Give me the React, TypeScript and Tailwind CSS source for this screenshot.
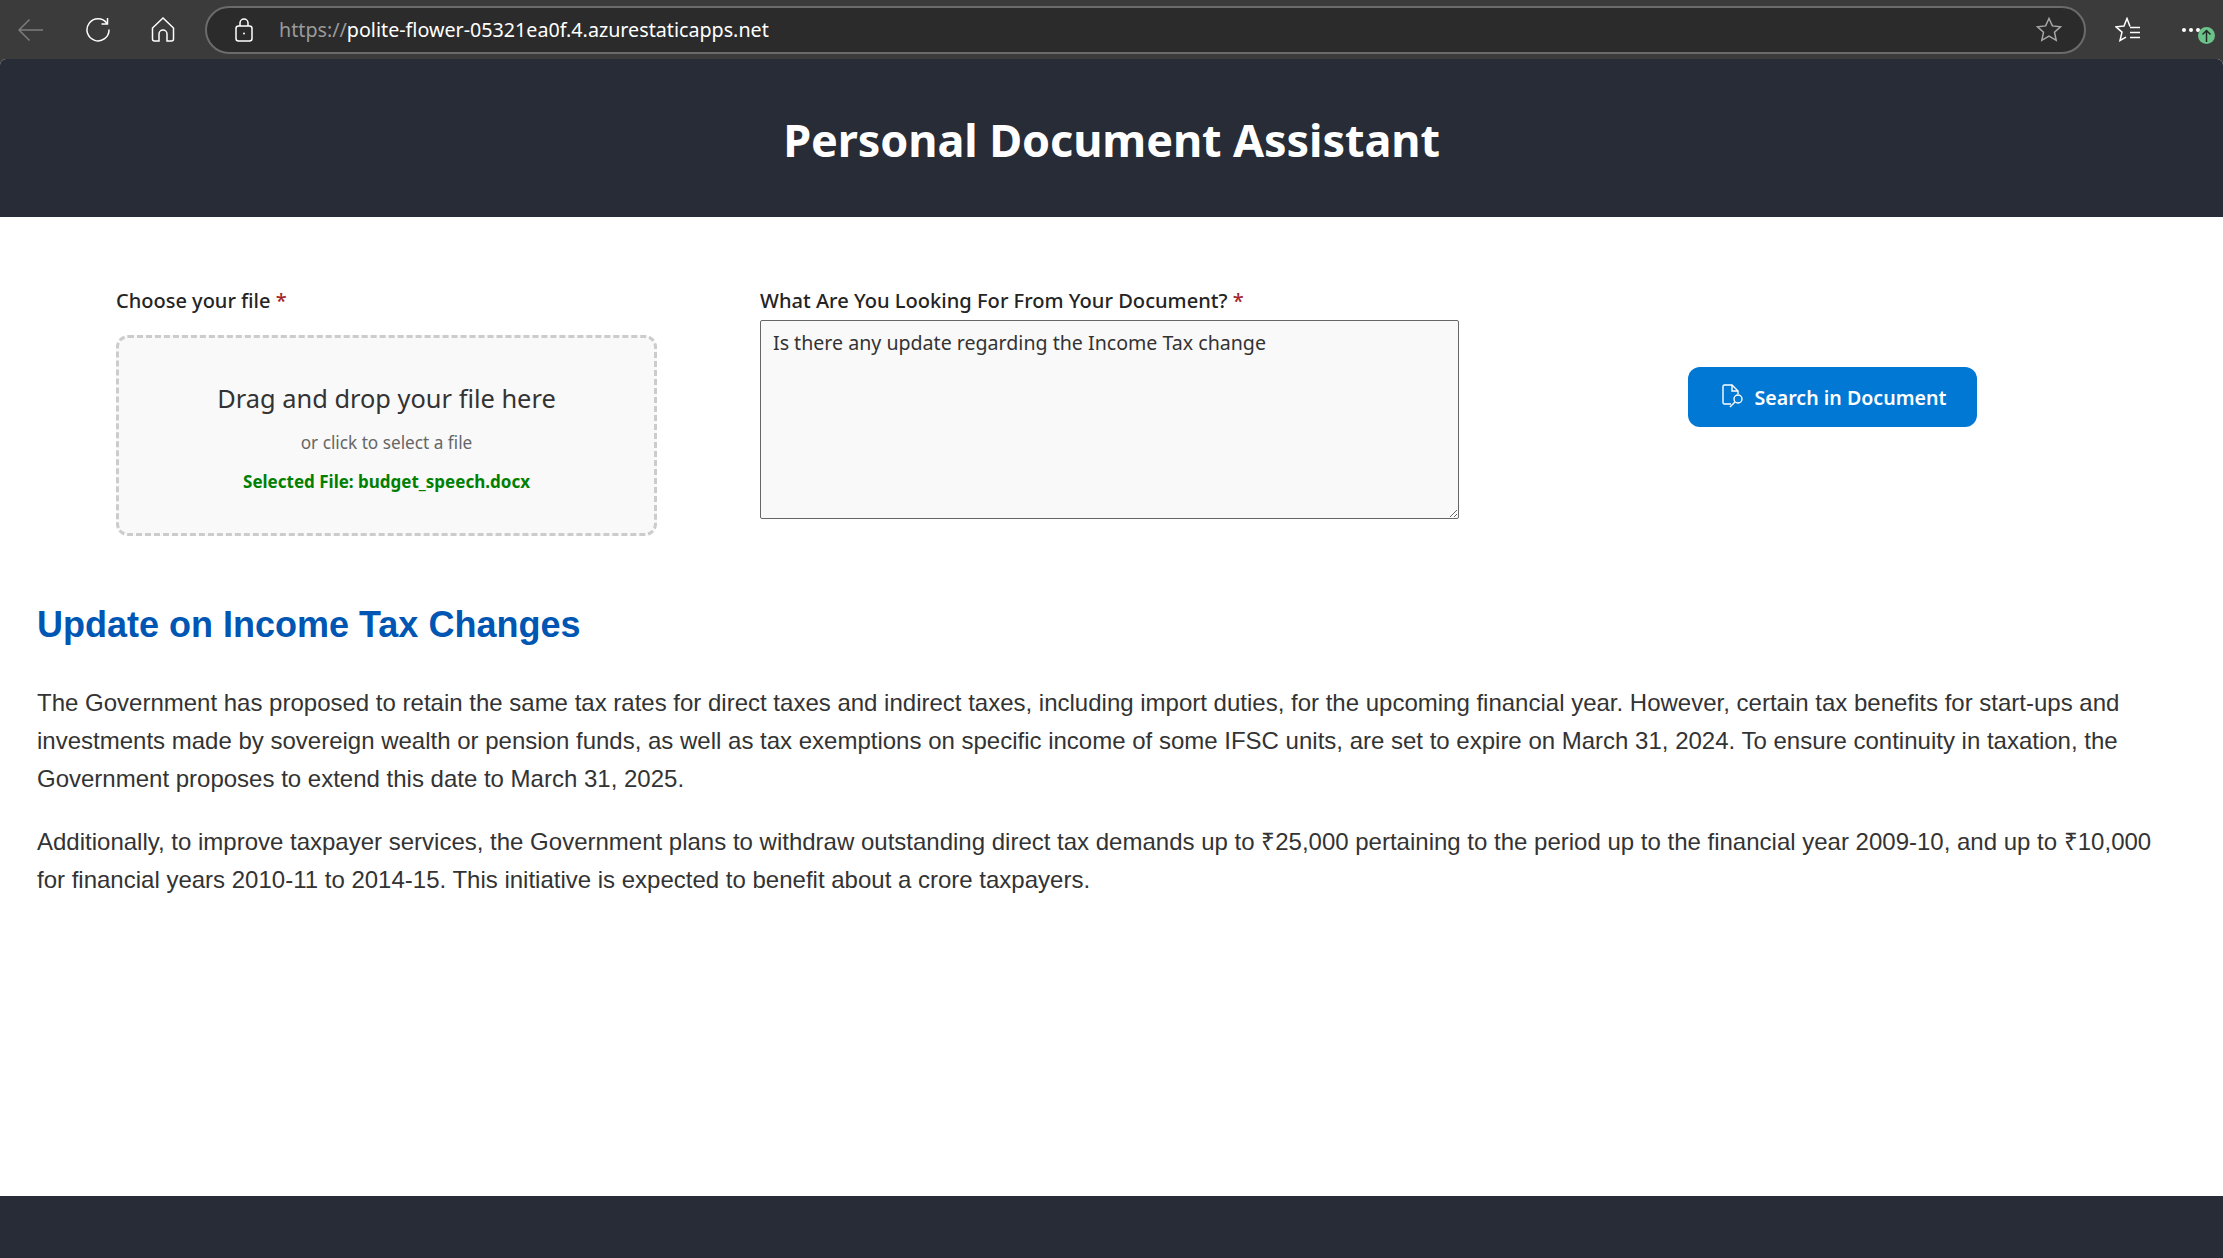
import React from 'react'

const ui = "font-['Noto_Sans',sans-serif]"

const BrowserBar = () => (
    <div className="flex h-[59px] items-center bg-[#3b3b3b] shrink-0">
        <svg className="ml-[18px] w-[25px] h-[24px]" viewBox="0 0 25 24" fill="none" stroke="#7d7d7d" strokeWidth="1.5">
            <path d="M1 12h24M11.5 1.5 1 12l10.5 10.5" />
        </svg>
        <svg className="ml-[42px] w-[25px] h-[25px]" viewBox="0 0 25 25" fill="none" stroke="#fff" strokeWidth="1.5">
            <path d="M22 6.5A11 11 0 1 0 24 12.5" />
            <path d="M22.5 1v6h-6" />
        </svg>
        <svg className="ml-[41px] w-[24px] h-[25px]" viewBox="0 0 24 25" fill="none" stroke="#fff" strokeWidth="1.5">
            <path d="M12 1 1.5 11v11a2 2 0 0 0 2 2h4.5v-7a4 4 0 0 1 8 0v7h4.5a2 2 0 0 0 2-2V11z" />
        </svg>
        <div className="ml-[30px] flex h-[48px] w-[1881px] items-center rounded-full border-2 border-[#6b6b6b] bg-[#2b2b2b]">
            <svg className="ml-[28px] w-[18px] h-[24px]" viewBox="0 0 18 24" fill="none" stroke="#fff" strokeWidth="1.5">
                <rect x="1" y="8" width="16" height="15" rx="2.5" />
                <path d="M5 8V5a4 4 0 0 1 8 0v3" />
                <circle cx="9" cy="15.5" r="1" fill="#fff" stroke="none" />
            </svg>
            <span className={`ml-[26px] text-[19.7px] text-white whitespace-nowrap ${ui}`}>
                <span className="text-[#9a9a9a]">https://</span>polite-flower-05321ea0f.4.azurestaticapps.net
            </span>
            <svg className="ml-auto mr-[22px] w-[26px] h-[25px]" viewBox="0 0 26 25" fill="none" stroke="#a8a8a8" strokeWidth="1.5">
                <path d="m13 1.5 3.4 7.4 8.1.9-6 5.5 1.7 8-7.2-4.1-7.2 4.1 1.7-8-6-5.5 8.1-.9z" />
            </svg>
        </div>
        <svg className="ml-[29px] w-[26px] h-[25px]" viewBox="0 0 26 25" fill="none" stroke="#fff" strokeWidth="1.5">
            <path d="M15 9.5 12 1.5 9 9l-8 .8 6 5.3-2 8.4 6-3.3" />
            <path d="M15 10.5h10M15 15.5h10M15 20.5h10" />
        </svg>
        <div className="relative ml-[41px] flex gap-[3px]">
            <span className="w-[4px] h-[4px] rounded-full bg-white" />
            <span className="w-[4px] h-[4px] rounded-full bg-white" />
            <span className="w-[4px] h-[4px] rounded-full bg-white" />
            <span className="absolute left-[16px] top-[-1px] flex w-[17px] h-[17px] items-center justify-center rounded-full bg-[#6cc38a]">
                <svg className="w-[11px] h-[13px]" viewBox="0 0 11 13" fill="none" stroke="#1f2a24" strokeWidth="1.5">
                    <path d="M5.5 13V1.5M1.5 5.5l4-4 4 4" />
                </svg>
            </span>
        </div>
    </div>
)

const App = () => {
    return (
        <div className="flex h-screen flex-col overflow-hidden bg-[#3b3b3b]">
            <BrowserBar />
            <div className="flex flex-1 flex-col overflow-hidden rounded-t-[6px] bg-white">
                <header className="flex h-[158px] shrink-0 items-center justify-center bg-[#282c36] pt-[3px]">
                    <h1 className={`text-[45px] font-bold tracking-[-0.1px] text-white ${ui}`}>Personal Document Assistant</h1>
                </header>

                <main className="flex-1">
                    <div className={`flex items-start pl-[116px] pt-[71px] ${ui}`}>
                        <div className="w-[541px]">
                            <label className="block text-[20px] font-medium leading-[26px] text-[#242424]">
                                Choose your file <span className="text-[#a4262c]">*</span>
                            </label>
                            <div className="mt-[21px] flex h-[201px] flex-col items-center rounded-[12px] border-[3px] border-dashed border-[#ccc] bg-[#f9f9f9] text-center">
                                <p className="mt-[42px] text-[25.4px] leading-[36px] text-[#333]">Drag and drop your file here</p>
                                <p className="mt-[15px] text-[17.2px] leading-[24px] text-[#666]">or click to select a file</p>
                                <p className="mt-[15px] text-[17px] font-bold leading-[24px] text-[#008000]">Selected File: budget_speech.docx</p>
                            </div>
                        </div>

                        <div className="ml-[103px] w-[699px]">
                            <label className="block text-[20.1px] font-medium leading-[26px] text-[#242424]">
                                What Are You Looking For From Your Document? <span className="text-[#a4262c]">*</span>
                            </label>
                            <textarea
                                className="mt-[6px] block h-[199px] w-full rounded-[2px] border border-[#666] bg-[#f9f9f9] px-[12px] pt-[9px] pb-[7px] text-[19.6px] leading-[26px] text-[#333]"
                                defaultValue="Is there any update regarding the Income Tax change"
                            />
                        </div>

                        <button className="ml-[229px] mt-[79px] flex h-[60px] w-[289px] items-center justify-center gap-[11px] rounded-[12px] bg-[#0078d4] pl-[3px] pt-[2px] text-[19.6px] font-semibold text-white">
                            <svg className="w-[22px] h-[24px] -translate-y-[2px]" viewBox="0 0 22 24" fill="none" stroke="#fff" strokeWidth="1.4">
                                <path d="M9 20H2.5a1.5 1.5 0 0 1-1.5-1.5v-16A1.5 1.5 0 0 1 2.5 1H10l6 6v3" />
                                <path d="M10 1v6h6" />
                                <circle cx="16" cy="15" r="4" />
                                <path d="m13 18-5 5" />
                            </svg>
                            Search in Document
                        </button>
                    </div>

                    <section className="pl-[37px] pr-[50px] pt-[66px] font-['Liberation_Sans',sans-serif]">
                        <h2 className="text-[36px] font-bold leading-[46px] text-[#0056b3]">Update on Income Tax Changes</h2>
                        <p className="mt-[36px] text-[24px] leading-[38px] text-[#333]">
                            The Government has proposed to retain the same tax rates for direct taxes and indirect taxes, including import duties, for the upcoming financial year. However, certain tax benefits for start-ups and investments made by sovereign wealth or pension funds, as well as tax exemptions on specific income of some IFSC units, are set to expire on March 31, 2024. To ensure continuity in taxation, the Government proposes to extend this date to March 31, 2025.
                        </p>
                        <p className="mt-[25px] text-[24px] leading-[38px] text-[#333]">
                            Additionally, to improve taxpayer services, the Government plans to withdraw outstanding direct tax demands up to ₹25,000 pertaining to the period up to the financial year 2009-10, and up to ₹10,000 for financial years 2010-11 to 2014-15. This initiative is expected to benefit about a crore taxpayers.
                        </p>
                    </section>
                </main>

                <footer className="h-[62px] shrink-0 bg-[#282c36]" />
            </div>
        </div>
    )
}

export default App
